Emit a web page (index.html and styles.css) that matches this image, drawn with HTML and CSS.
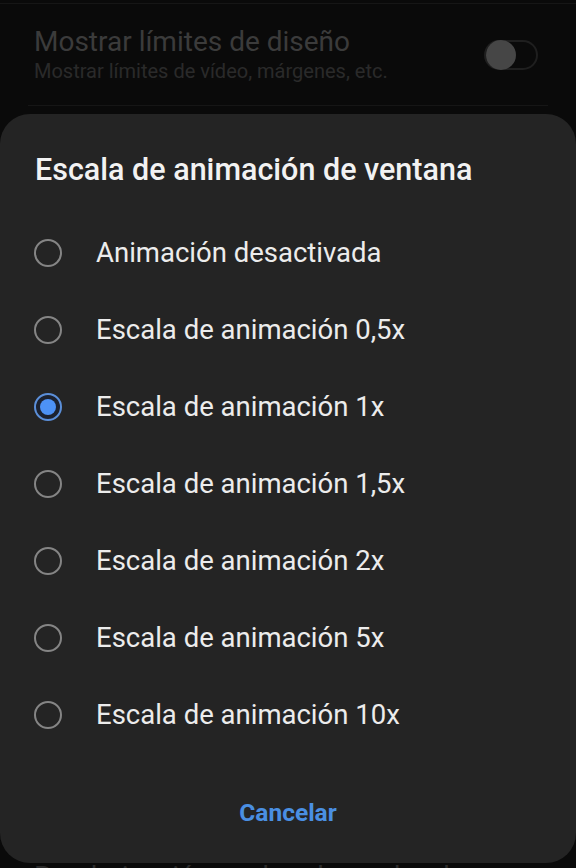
FILE: index.html
```html
<!DOCTYPE html>
<html lang="es">
<head>
    <meta charset="UTF-8">
    <meta name="viewport" content="width=device-width, initial-scale=1.0">
    <title>Escala de animación de ventana</title>
    <link rel="stylesheet" href="styles.css">
</head>
<body>
    <div class="settings">
        <div class="setting">
            <div class="setting-text">
                <div class="setting-title">Mostrar límites de diseño</div>
                <div class="setting-summary">Mostrar límites de vídeo, márgenes, etc.</div>
            </div>
            <div class="switch"><span class="knob"></span></div>
        </div>
        <div class="setting filler"></div>
        <div class="setting last">
            <div class="setting-text">
                <div class="setting-title">Renderización acelerada por hardware</div>
            </div>
        </div>
    </div>

    <div class="dialog">
        <h2 class="dialog-title">Escala de animación de ventana</h2>
        <ul class="options">
            <li class="option"><span class="radio"></span>Animación desactivada</li>
            <li class="option"><span class="radio"></span>Escala de animación 0,5x</li>
            <li class="option"><span class="radio checked"></span>Escala de animación 1x</li>
            <li class="option"><span class="radio"></span>Escala de animación 1,5x</li>
            <li class="option"><span class="radio"></span>Escala de animación 2x</li>
            <li class="option"><span class="radio"></span>Escala de animación 5x</li>
            <li class="option"><span class="radio"></span>Escala de animación 10x</li>
        </ul>
        <div class="dialog-actions">
            <button class="btn-cancel">Cancelar</button>
        </div>
    </div>
</body>
</html>
```

FILE: styles.css
```css
body {
    font-family: Roboto, "Noto Sans", sans-serif;
    background-color: #0a0a0a;
    color: #e9e9e9;
    margin: 0;
    height: 868px;
    overflow: hidden;
}

.settings {
    padding: 0 28px;
    border-top: 1px solid #161616;
    margin-top: 3px;
}

.setting {
    display: flex;
    align-items: center;
    justify-content: space-between;
    height: 101px;
    border-bottom: 1px solid #161616;
    padding: 0 6px;
}

.setting.filler {
    height: 748px;
}

.setting-title {
    font-size: 28px;
    color: #3b3b3b;
    line-height: 32px;
}

.setting-summary {
    font-size: 20px;
    color: #2a2a2a;
    line-height: 26px;
}

.setting.last {
    align-items: flex-start;
    padding-top: 6px;
}

.setting.last .setting-title {
    color: #2c2c2c;
}

.switch {
    width: 50px;
    height: 26px;
    border: 2px solid #1f1f1f;
    border-radius: 15px;
    position: relative;
    margin-right: 4px;
}

.switch .knob {
    position: absolute;
    left: 0;
    top: -2px;
    width: 30px;
    height: 30px;
    border-radius: 50%;
    background: #464646;
}

.dialog {
    position: absolute;
    left: 0;
    top: 114px;
    width: 576px;
    height: 749px;
    box-sizing: border-box;
    background: #242424;
    border-radius: 30px;
    padding: 38px 0 0;
    display: flex;
    flex-direction: column;
}

.dialog-title {
    margin: 0 0 26px;
    padding: 0 35px;
    font-size: 30.5px;
    font-weight: 500;
    line-height: 36px;
    color: #f2f2f2;
}

.options {
    list-style: none;
    margin: 0;
    padding: 0;
}

.option {
    display: flex;
    align-items: center;
    height: 77px;
    padding-left: 34px;
    font-size: 27.5px;
    color: #ececec;
}

.radio {
    width: 28px;
    height: 28px;
    box-sizing: border-box;
    border: 2px solid #858585;
    border-radius: 50%;
    margin-right: 34px;
    flex-shrink: 0;
    position: relative;
}

.radio.checked {
    border-color: #5b8fd9;
    background: #1c2230;
}

.radio.checked::after {
    content: '';
    position: absolute;
    left: 4px;
    top: 4px;
    width: 16px;
    height: 16px;
    border-radius: 50%;
    background: #4d92f5;
}

.dialog-actions {
    display: flex;
    justify-content: center;
    margin-top: 35px;
}

.btn-cancel {
    font-family: Roboto, "Noto Sans", sans-serif;
    font-size: 24.5px;
    font-weight: 700;
    color: #4a8fe2;
    background: none;
    border: none;
    height: 48px;
    padding: 0 24px;
}
```
